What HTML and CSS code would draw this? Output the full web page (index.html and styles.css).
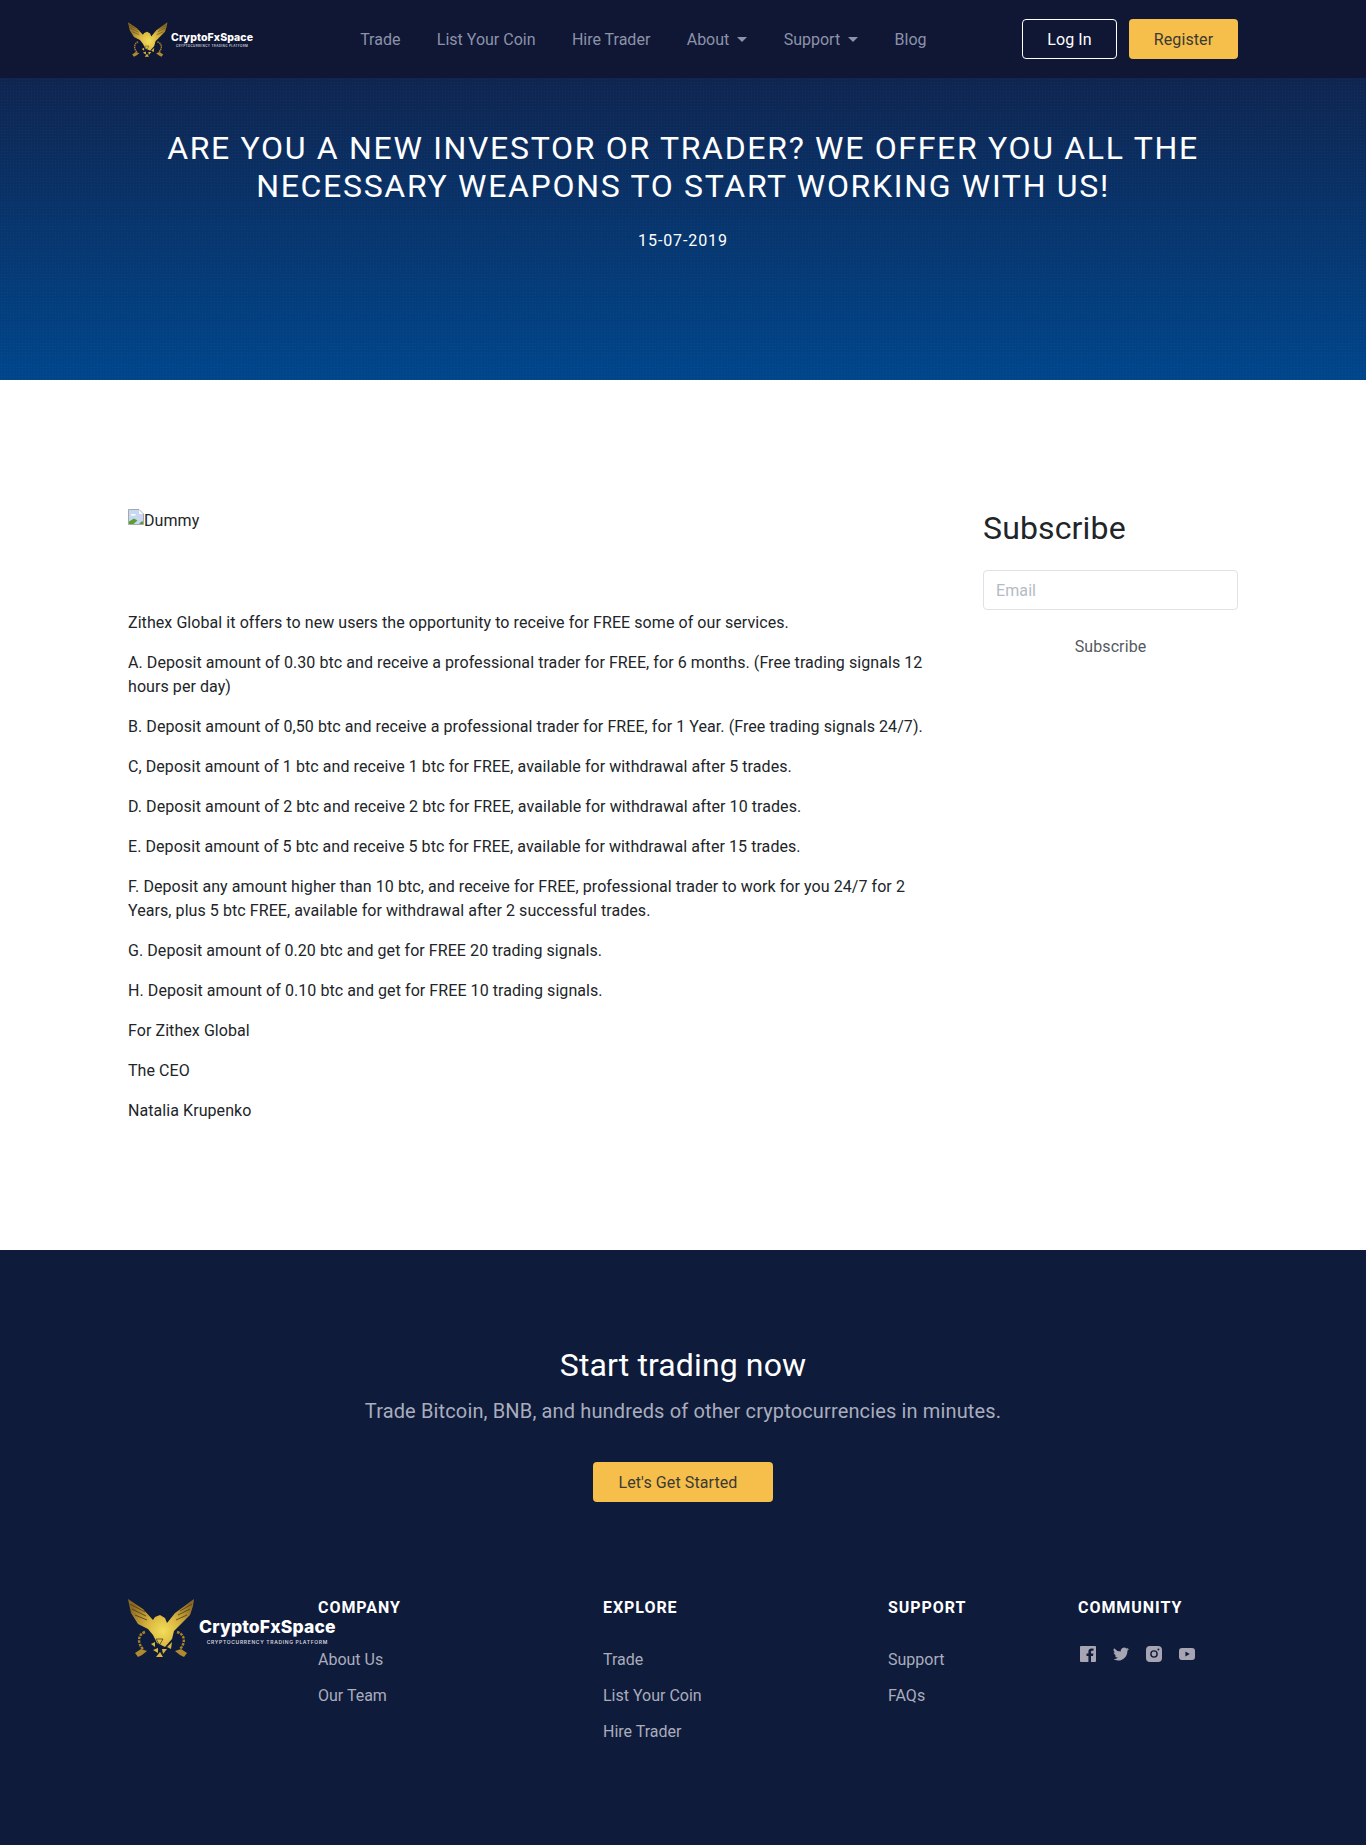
FILE: index.html
```html
<!DOCTYPE html>
<html lang="en">
<head>
<meta charset="utf-8">
<title>CryptoFxSpace</title>
<link rel="stylesheet" href="styles.css">
</head>
<body>
<svg class="defs" width="0" height="0" aria-hidden="true">
  <defs>
    <radialGradient id="gold" gradientUnits="userSpaceOnUse" cx="38" cy="36" r="38">
      <stop offset="0" stop-color="#f2de59"/>
      <stop offset="0.45" stop-color="#d8b43f"/>
      <stop offset="1" stop-color="#8c6a23"/>
    </radialGradient>
    <symbol id="eagle" viewBox="3 3 67 60">
      <path fill="url(#gold)" d="M3 4 L18 14 L28 25 L30 22 L35 20 L40 23 L42 28 L50 18 L69 4 L68 11 L65 20 L57 28 L49 36 L47 44 L40 52 L32 48 L28 40 L23 34 L13 29 L6 18 Z"/>
      <path fill="none" stroke="#4a3817" stroke-width="0.8" d="M5 9 L20 17 M7 14 L21 21 M10 20 L22 25 M67 9 L55 16 M65 14 L53 20 M62 20 L51 25"/>
      <path fill="none" stroke="#a5812c" stroke-width="2.4" stroke-dasharray="2.6 1" d="M20 37 C13 39 12 48 18 54 M52 37 C60 39 61 48 55 54"/>
      <path fill="#b08a30" d="M10 58 L16 54 L22 56 L17 60 L13 62 Z M62 58 L56 54 L50 56 L55 60 L59 62 Z"/>
      <path fill="#d8b43f" d="M26 49 L30 47 L30 52 Z M28 55 L33 53 L33 58 Z M37 54 L42 54 L38 59 Z M42 52 L47 47 L46 54 Z M31 62 L35 57 L38 62 Z"/>
      <path fill="none" stroke="#3a2f1c" stroke-width="0.7" d="M31 44 H38 L34.5 50 Z"/>
    </symbol>
  </defs>
</svg>

<header class="topbar">
  <div class="container topbar-inner">
    <a class="brand" href="#">
      <svg class="brand-eagle"><use href="#eagle"/></svg>
      <span class="brand-text">
        <span class="brand-name">CryptoFxSpace</span>
        <span class="brand-tag">CRYPTOCURRENCY TRADING PLATFORM</span>
      </span>
    </a>
    <nav class="mainnav">
      <a href="#">Trade</a>
      <a href="#">List Your Coin</a>
      <a href="#">Hire Trader</a>
      <a href="#" class="caret">About</a>
      <a href="#" class="caret">Support</a>
      <a href="#">Blog</a>
    </nav>
    <div class="actions">
      <a class="btn btn-outline" href="#">Log In</a>
      <a class="btn btn-gold btn-register" href="#">Register</a>
    </div>
  </div>
</header>

<section class="hero">
  <div class="container hero-inner">
    <h1>ARE YOU A NEW INVESTOR OR TRADER? WE OFFER YOU ALL THE NECESSARY WEAPONS TO START WORKING WITH US!</h1>
    <p>15-07-2019</p>
  </div>
</section>

<main class="container content">
  <article class="post">
    <div class="broken">
      <svg class="broken-icon" viewBox="0 0 16 16" aria-hidden="true">
        <path fill="#c9d8f2" stroke="#a5a8ad" stroke-width="1" d="M0.5 0.5 H11 L15.5 5 V15.5 H0.5 Z"/>
        <path fill="#fff" d="M11 1 V5 H15 Z"/>
        <path fill="#fff" d="M3 5 h4.5 v1.6 h-4.5 Z"/>
        <path fill="#5aa02c" d="M1 15 V12.5 L6 9.5 L9.5 11.5 L5.5 15 Z M11 15 L14 12 L15 13 V15 Z"/>
      </svg>Dummy
    </div>
    <p>Zithex Global it offers to new users the opportunity to receive for FREE some of our services.</p>
    <p>A. Deposit amount of 0.30 btc and receive a professional trader for FREE, for 6 months. (Free trading signals 12 hours per day)</p>
    <p>B. Deposit amount of 0,50 btc and receive a professional trader for FREE, for 1 Year. (Free trading signals 24/7).</p>
    <p>C, Deposit amount of 1 btc and receive 1 btc for FREE, available for withdrawal after 5 trades.</p>
    <p>D. Deposit amount of 2 btc and receive 2 btc for FREE, available for withdrawal after 10 trades.</p>
    <p>E. Deposit amount of 5 btc and receive 5 btc for FREE, available for withdrawal after 15 trades.</p>
    <p>F. Deposit any amount higher than 10 btc, and receive for FREE, professional trader to work for you 24/7 for 2 Years, plus 5 btc FREE, available for withdrawal after 2 successful trades.</p>
    <p>G. Deposit amount of 0.20 btc and get for FREE 20 trading signals.</p>
    <p>H. Deposit amount of 0.10 btc and get for FREE 10 trading signals.</p>
    <p>For Zithex Global</p>
    <p>The CEO</p>
    <p>Natalia Krupenko</p>
  </article>
  <aside class="side">
    <h2>Subscribe</h2>
    <input class="email" type="text" placeholder="Email">
    <a class="side-btn" href="#">Subscribe</a>
  </aside>
</main>

<footer class="footer">
  <section class="cta">
    <h2>Start trading now</h2>
    <p>Trade Bitcoin, BNB, and hundreds of other cryptocurrencies in minutes.</p>
    <a class="btn btn-gold btn-start" href="#">Let's Get Started</a>
  </section>
  <div class="container footer-grid">
    <a class="brand brand-large" href="#">
      <svg class="brand-eagle"><use href="#eagle"/></svg>
      <span class="brand-text">
        <span class="brand-name">CryptoFxSpace</span>
        <span class="brand-tag">CRYPTOCURRENCY TRADING PLATFORM</span>
      </span>
    </a>
    <div class="fcol">
      <h3>COMPANY</h3>
      <a href="#">About Us</a>
      <a href="#">Our Team</a>
    </div>
    <div class="fcol">
      <h3>EXPLORE</h3>
      <a href="#">Trade</a>
      <a href="#">List Your Coin</a>
      <a href="#">Hire Trader</a>
    </div>
    <div class="fcol">
      <h3>SUPPORT</h3>
      <a href="#">Support</a>
      <a href="#">FAQs</a>
    </div>
    <div class="fcol">
      <h3>COMMUNITY</h3>
      <div class="social">
        <svg viewBox="0 0 16 16"><path d="M1 0 H15 a1 1 0 0 1 1 1 V15 a1 1 0 0 1 -1 1 H11 V10 H13 L13.4 7.5 H11 V6 C11 5.2 11.4 4.8 12.2 4.8 H13.5 V2.6 H11.6 C9.6 2.6 8.4 3.8 8.4 5.8 V7.5 H6.5 V10 H8.4 V16 H1 a1 1 0 0 1 -1 -1 V1 a1 1 0 0 1 1 -1 Z"/></svg>
        <svg viewBox="0 0 16 16"><path d="M16 3.1 a6.6 6.6 0 0 1 -1.9 .5 A3.3 3.3 0 0 0 15.5 1.8 a6.5 6.5 0 0 1 -2.1 .8 A3.3 3.3 0 0 0 7.8 5.6 A9.3 9.3 0 0 1 1.1 2.2 A3.3 3.3 0 0 0 2.1 6.6 A3.2 3.2 0 0 1 .6 6.2 A3.3 3.3 0 0 0 3.3 9.4 A3.3 3.3 0 0 1 1.8 9.5 A3.3 3.3 0 0 0 4.9 11.8 A6.6 6.6 0 0 1 0 13.1 A9.3 9.3 0 0 0 5 14.6 C11 14.6 14.4 9.6 14.4 5.2 V4.8 A6.6 6.6 0 0 0 16 3.1 Z"/></svg>
        <svg viewBox="0 0 16 16"><path fill-rule="evenodd" d="M4 0 H12 a4 4 0 0 1 4 4 V12 a4 4 0 0 1 -4 4 H4 a4 4 0 0 1 -4 -4 V4 a4 4 0 0 1 4 -4 Z M8 4.2 a3.8 3.8 0 1 0 0 7.6 a3.8 3.8 0 1 0 0 -7.6 Z M8 5.6 a2.4 2.4 0 1 1 0 4.8 a2.4 2.4 0 1 1 0 -4.8 Z M12.4 2.6 a1 1 0 1 0 0 2 a1 1 0 1 0 0 -2 Z"/></svg>
        <svg viewBox="0 0 16 16"><path fill-rule="evenodd" d="M3 2 H13 a3 3 0 0 1 3 3 V11 a3 3 0 0 1 -3 3 H3 a3 3 0 0 1 -3 -3 V5 a3 3 0 0 1 3 -3 Z M6.4 5.4 V10.6 L10.8 8 Z"/></svg>
      </div>
    </div>
  </div>
</footer>
</body>
</html>
```

FILE: styles.css
```css
* { box-sizing: border-box; }
html, body { margin: 0; padding: 0; }
body {
  font-family: Roboto, "Noto Sans", "Liberation Sans", sans-serif;
  font-size: 16px;
  line-height: 24px;
  color: #212529;
  background: #fff;
}
a { text-decoration: none; color: inherit; }
.defs { position: absolute; }
.container { width: 1140px; margin: 0 auto; padding: 0 15px; }

.topbar { background: #0f1735; height: 78px; }
.topbar-inner { display: flex; align-items: center; height: 78px; }

.brand { display: flex; align-items: center; flex: none; }
.brand-eagle { width: 40px; height: 37px; flex: none; }
.brand-text { display: flex; flex-direction: column; align-items: center; margin-left: 3px; margin-top: 2px; }
.brand-name { font-family: Inter, sans-serif; font-weight: 800; font-size: 10.5px; line-height: 11px; color: #fff; letter-spacing: .1px; }
.brand-tag { font-family: Inter, sans-serif; font-size: 3px; line-height: 6px; color: #cfd2dc; letter-spacing: .38px; font-weight: 600; white-space: nowrap; }

.mainnav { display: flex; margin-left: 107px; padding-top: 1px; flex: 1; color: #8d92a8; font-size: 16px; letter-spacing: 0; }
.mainnav a { margin-right: 36.4px; }
.caret::after {
  content: "";
  display: inline-block;
  margin-left: 8px;
  vertical-align: 3px;
  border-top: 5px solid currentColor;
  border-left: 5px solid transparent;
  border-right: 5px solid transparent;
}

.actions { display: flex; gap: 12px; }
.btn { display: block; height: 40px; line-height: 40px; text-align: center; border-radius: 4px; font-size: 16px; letter-spacing: .1px; border: 1px solid transparent; }
.btn-outline { width: 95px; border-color: #fff; color: #fff; }
.btn-gold { background: #f6bf4b; color: #3b3a33; }
.btn-register { width: 109px; }

.hero {
  height: 302px;
  background:
    radial-gradient(rgba(255, 255, 255, .03) 1px, transparent 1px) 0 0 / 3px 3px,
    linear-gradient(180deg, #0f2550 0%, #00468c 100%);
  color: #fff;
  text-align: center;
}
.hero-inner { padding-top: 51px; }
.hero h1 { margin: 0 auto; width: 1060px; font-size: 32px; line-height: 38px; font-weight: 400; letter-spacing: 1.69px; }
.hero p { margin: 24px 0 0; letter-spacing: .9px; }

.content { display: flex; justify-content: space-between; padding-top: 129px; height: 870px; }
.post { width: 815px; letter-spacing: .07px; }
.post p { margin: 0 0 16px; }
.broken { height: 102px; line-height: 24px; }
.broken-icon { width: 16px; height: 16px; vertical-align: 1px; }
.side { width: 255px; letter-spacing: .1px; }
.side h2 { margin: 0; font-size: 32px; line-height: 38px; font-weight: 400; letter-spacing: .15px; }
.email { display: block; width: 100%; height: 40px; margin-top: 23px; padding: 6px 12px; border: 1px solid #dee2e6; border-radius: 4px; font: inherit; letter-spacing: .1px; color: #495057; background: #fff; }
.email::placeholder { color: #b4bbc3; opacity: 1; }
.side-btn { display: block; height: 40px; line-height: 38px; margin-top: 18px; text-align: center; color: #55595e; }

.footer { background: #0f1b3a; color: #fff; height: 595px; }
.cta { text-align: center; padding-top: 96px; }
.cta h2 { margin: 0; font-size: 32px; line-height: 38px; font-weight: 400; letter-spacing: .12px; }
.cta p { margin: 12px 0 0; font-size: 20px; line-height: 30px; color: #a9adbd; letter-spacing: .14px; }
.btn-start { width: 180px; margin: 36px auto 0; padding-right: 10px; }

.footer-grid { display: flex; margin-top: 96px; }
.brand-large { width: 190px; height: 64px; align-items: flex-start; }
.brand-large .brand-eagle { width: 67px; height: 60px; }
.brand-large .brand-text { margin-left: 4px; margin-top: 19px; }
.brand-large .brand-name { font-size: 17.5px; line-height: 20px; letter-spacing: .15px; }
.brand-large .brand-tag { font-size: 5px; line-height: 10px; letter-spacing: .65px; }

.fcol { display: flex; flex-direction: column; align-items: flex-start; color: #a9adbd; letter-spacing: 0; }
.fcol:nth-child(2) { width: 285px; }
.fcol:nth-child(3) { width: 285px; }
.fcol:nth-child(4) { width: 190px; }
.fcol h3 { margin: 0 0 30px; font-size: 16px; line-height: 20px; font-weight: 700; color: #fff; letter-spacing: .95px; }
.fcol a { line-height: 24px; margin-bottom: 12px; }
.social { display: flex; gap: 17px; padding: 0 2px; margin-top: -2px; }
.social svg { width: 16px; height: 16px; fill: #a7a5b3; }
```
